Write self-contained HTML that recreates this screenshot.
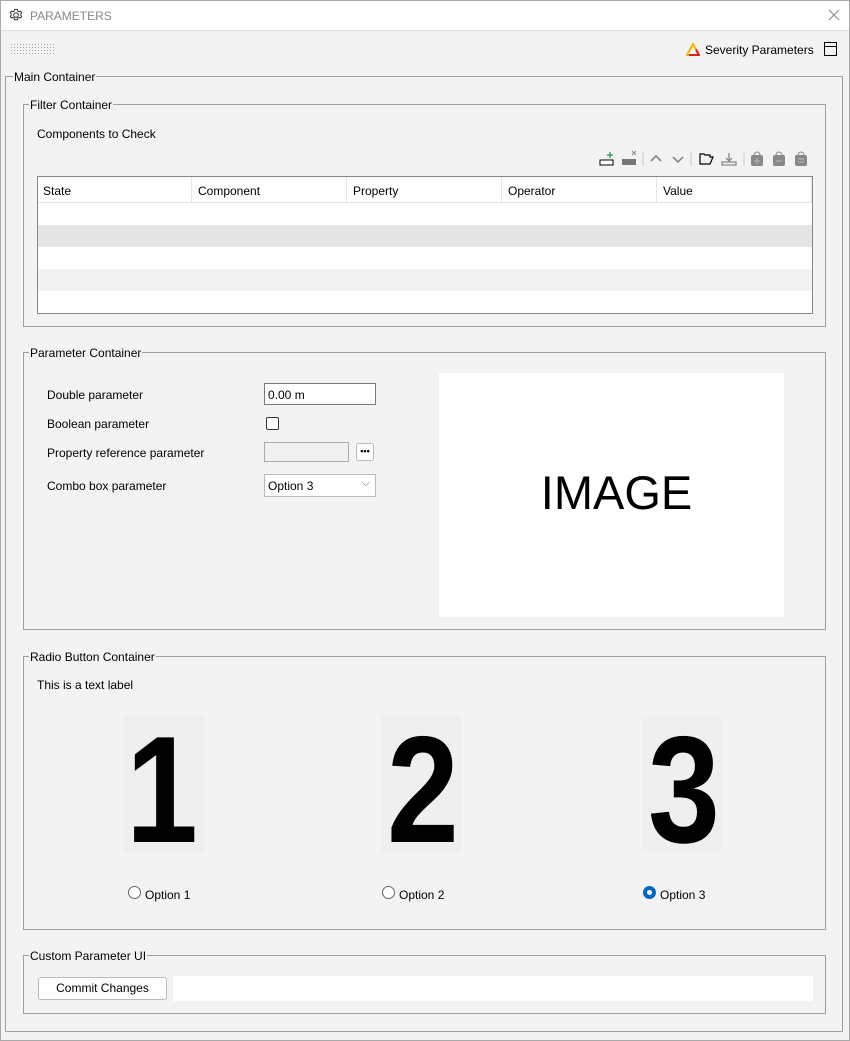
<!DOCTYPE html>
<html><head><style>
*{box-sizing:border-box;margin:0;padding:0}
body{width:850px;height:1041px;background:#f3f3f3;font-family:"Liberation Sans",sans-serif;font-size:12px;color:#000;position:relative;overflow:hidden}
.a{position:absolute}
.fs{position:absolute;border:1px solid #a0a0a0}
.lg{position:absolute;background:#f3f3f3;padding:0 1px;font-size:12px;line-height:14px}
.t{position:absolute;font-size:12px;line-height:14px}
.bg{position:absolute;width:80px;height:136px;top:716px;background:#efefef}
.dig{position:absolute;font-size:152px;font-weight:bold;line-height:1;width:80px;text-align:center;top:714px;transform:scaleX(0.85)}
.rad{position:absolute;width:13px;height:13px;border:1px solid #666;border-radius:50%;background:#fff}
</style></head><body>
<div class="a" style="left:0;top:0;width:850px;height:31px;background:#fff;border-bottom:1px solid #ddd"></div>
<div class="a" style="left:0;top:0;width:850px;height:1041px;border:1px solid #aaa"></div>
<svg class="a" style="left:9px;top:8px" width="14" height="14" viewBox="0 0 14 14"><circle cx="7" cy="7" r="2.3" fill="none" stroke="#333"/><path d="M7 1.2l1.3.3.4 1.5 1.4.8 1.5-.5 1 1.2-.8 1.4v1.4l.8 1.4-1 1.2-1.5-.5-1.4.8-.4 1.5H5.7l-.4-1.5-1.4-.8-1.5.5-1-1.2.8-1.4V5.8L1.4 4.4l1-1.2 1.5.5 1.4-.8.4-1.5z" fill="none" stroke="#333"/></svg>
<div class="t" style="left:30px;top:9px;color:#888">PARAMETERS</div>
<svg class="a" style="left:828px;top:9px" width="12" height="12"><path d="M1 1l10 10M11 1L1 11" stroke="#888" stroke-width="1"/></svg>
<div class="a" style="left:10px;top:43px;width:46px;height:13px;background-image:radial-gradient(#aaa 0.6px,transparent 0.7px);background-size:3px 3px"></div>
<svg class="a" style="left:686px;top:43px" width="14" height="13"><path d="M7 1L1 12h12z" fill="none" stroke="#f5b800" stroke-width="2"/><path d="M10 6.5L13 12H3" fill="none" stroke="#e02020" stroke-width="2"/></svg>
<div class="t" style="left:705px;top:43px">Severity Parameters</div>
<div class="a" style="left:824px;top:42px;width:13px;height:14px;border:1px solid #000"><div style="border-top:1px solid #000;margin-top:3px"></div></div>

<div class="fs" style="left:5px;top:76px;width:838px;height:956px"></div>
<div class="lg" style="left:13px;top:70px">Main Container</div>

<div class="fs" style="left:23px;top:104px;width:803px;height:223px"></div>
<div class="lg" style="left:29px;top:98px">Filter Container</div>
<div class="t" style="left:37px;top:127px">Components to Check</div>
<svg class="a" style="left:598px;top:150px" width="215" height="18">
<rect x="2" y="10" width="13" height="5" fill="#fff" stroke="#000"/><path d="M12 2v6M9 5h6" stroke="#1a9a5a" stroke-width="1.3"/>
<rect x="24" y="9" width="14" height="6" fill="#777"/><path d="M34 1l4 4M38 1l-4 4" stroke="#888"/>
<line x1="45" y1="2" x2="45" y2="16" stroke="#ccc"/>
<path d="M53 11l5-5 5 5M75 7l5 5 5-5" fill="none" stroke="#888" stroke-width="1.6"/>
<line x1="93" y1="2" x2="93" y2="16" stroke="#ccc"/>
<path d="M102 4h4l1 1h5v2h3l-3 7h-10z" fill="none" stroke="#000" stroke-width="1.2"/>
<path d="M131 3v8M128 8l3 3 3-3M124 12h14v3h-14z" fill="none" stroke="#888" stroke-width="1.3"/>
<line x1="146" y1="2" x2="146" y2="16" stroke="#ccc"/>
<g fill="#888"><rect x="153" y="5" width="12" height="11" rx="2"/><rect x="175" y="5" width="12" height="11" rx="2"/><rect x="197" y="5" width="12" height="11" rx="2"/></g>
<g fill="none" stroke="#888"><path d="M156 5a3 3 0 0 1 6 0M178 5a3 3 0 0 1 6 0M200 5a3 3 0 0 1 6 0"/></g>
<g stroke="#bbb"><path d="M159 8v6M156 11h6M178 11h6M200 9h6M200 12h6"/></g>
</svg>
<div class="a" style="left:37px;top:176px;width:776px;height:138px;border:1px solid #828790;background:#fff">
<div style="height:26px;border-bottom:1px solid #e5e5e5;display:flex">
<div style="width:154px;border-right:1px solid #e5e5e5;padding:7px 5px">State</div>
<div style="width:155px;border-right:1px solid #e5e5e5;padding:7px 6px">Component</div>
<div style="width:155px;border-right:1px solid #e5e5e5;padding:7px 6px">Property</div>
<div style="width:155px;border-right:1px solid #e5e5e5;padding:7px 6px">Operator</div>
<div style="width:155px;border-right:1px solid #e5e5e5;padding:7px 6px">Value</div>
</div>
<div style="height:22px"></div><div style="height:22px;background:#e6e6e6"></div><div style="height:22px"></div><div style="height:22px;background:#f2f2f2"></div>
</div>

<div class="fs" style="left:23px;top:352px;width:803px;height:278px"></div>
<div class="lg" style="left:29px;top:346px">Parameter Container</div>
<div class="t" style="left:47px;top:388px">Double parameter</div>
<div class="t" style="left:47px;top:417px">Boolean parameter</div>
<div class="t" style="left:47px;top:446px">Property reference parameter</div>
<div class="t" style="left:47px;top:479px">Combo box parameter</div>
<div class="a" style="left:264px;top:383px;width:112px;height:22px;border:1px solid #7a7a7a;background:#fff;padding:4px 3px">0.00 m</div>
<div class="a" style="left:266px;top:417px;width:13px;height:13px;border:1px solid #333;border-radius:2px;background:#fff"></div>
<div class="a" style="left:264px;top:442px;width:85px;height:20px;border:1px solid #aaa;background:#f0f0f0"></div>
<div class="a" style="left:356px;top:443px;width:18px;height:18px;border:1px solid #bbb;border-radius:3px;background:#fff;font-size:9px;text-align:center;line-height:14px;font-weight:bold">•••</div>
<div class="a" style="left:264px;top:474px;width:112px;height:23px;border:1px solid #bbb;background:#fff;padding:4px 3px">Option 3<span style="position:absolute;right:5px;top:2px;color:#666;font-size:11px">⌵</span></div>
<div class="a" style="left:439px;top:373px;width:345px;height:244px;background:#fff"></div>
<div class="a" style="left:439px;top:373px;width:355px;height:244px;font-size:47px;text-align:center;line-height:240px">IMAGE</div>

<div class="fs" style="left:23px;top:656px;width:803px;height:274px"></div>
<div class="lg" style="left:29px;top:650px">Radio Button Container</div>
<div class="t" style="left:37px;top:678px">This is a text label</div>
<div class="bg" style="left:124px"></div><div class="bg" style="left:381px"></div><div class="bg" style="left:642px"></div>
<div class="dig" style="left:120px">1</div>
<div class="dig" style="left:381px">2</div>
<div class="dig" style="left:642px">3</div>
<div class="rad" style="left:128px;top:886px"></div><div class="t" style="left:145px;top:888px">Option 1</div>
<div class="rad" style="left:382px;top:886px"></div><div class="t" style="left:399px;top:888px">Option 2</div>
<div class="rad" style="left:643px;top:886px;border:4px solid #0067c0"></div><div class="t" style="left:660px;top:888px">Option 3</div>

<div class="fs" style="left:23px;top:955px;width:803px;height:59px"></div>
<div class="lg" style="left:29px;top:949px">Custom Parameter UI</div>
<div class="a" style="left:38px;top:977px;width:129px;height:23px;border:1px solid #bbb;border-radius:3px;background:#fdfdfd;text-align:center;line-height:21px">Commit Changes</div>
<div class="a" style="left:173px;top:976px;width:640px;height:25px;background:#fff"></div>
</body></html>
